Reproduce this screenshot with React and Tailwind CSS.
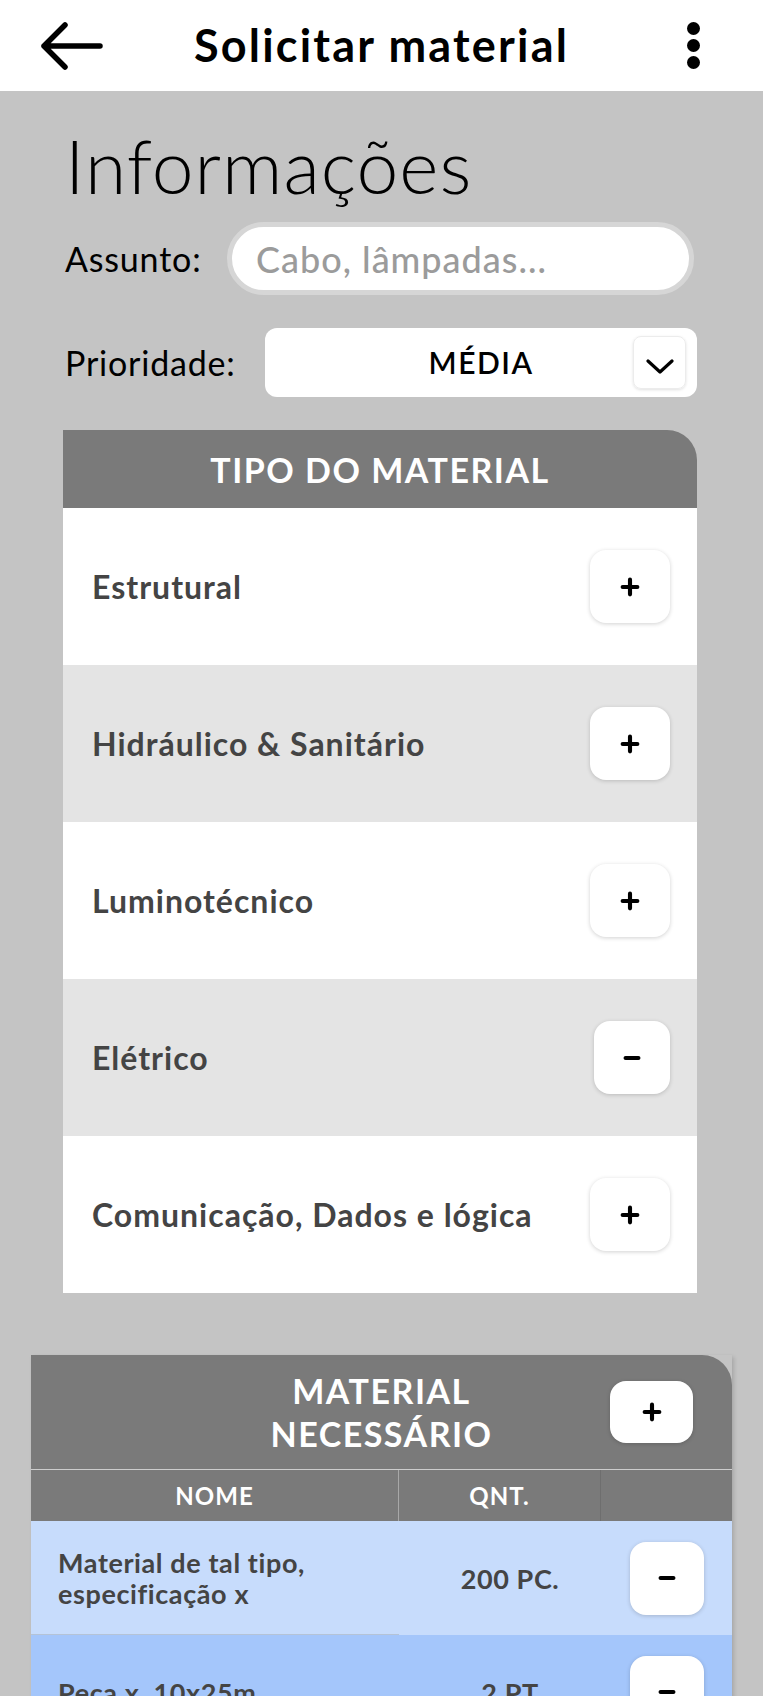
import { useState } from 'react'

const ROW_ICON = {
  plus:  'M12 4v16M4 12h16',
  minus: 'M5 12h14',
}

function SignIcon({ kind }) {
  return (
    <svg className="w-[22px] h-[22px]" viewBox="0 0 24 24" fill="none" stroke="black"
         strokeWidth={4.5} strokeLinecap="round">
      <path d={ROW_ICON[kind]} />
    </svg>
  )
}

function SquareButton({ kind = 'plus', className = '' }) {
  return (
    <button
      className={`flex items-center justify-center bg-white rounded-[16px] shadow-[0_1px_4px_rgba(0,0,0,0.18)] ${className}`}
    >
      <SignIcon kind={kind} />
    </button>
  )
}

// tipo do material rows
const TIPOS = [
  { label: 'Estrutural',                   kind: 'plus',  bg: 'bg-white' },
  { label: 'Hidráulico & Sanitário',       kind: 'plus',  bg: 'bg-[#e4e4e4]' },
  { label: 'Luminotécnico',                kind: 'plus',  bg: 'bg-white' },
  { label: 'Elétrico',                     kind: 'minus', bg: 'bg-[#e4e4e4]' },
  { label: 'Comunicação, Dados e lógica',  kind: 'plus',  bg: 'bg-white' },
]

const MATERIAIS = [
  { nome: ['Material de tal tipo,', 'especificação x'], qnt: '200 PC.', bg: 'bg-[#c7dcfc]' },
  { nome: ['Peça x, 10x25m'],                           qnt: '2 PT',    bg: 'bg-[#a4c6fb]' },
]

export default function App() {
  const [assunto, setAssunto] = useState('')

  return (
    <div className="w-[763px] h-[1696px] overflow-hidden bg-[#c4c4c4] font-['Lato',sans-serif] text-black">

      {/* ── top bar ── */}
      <header className="h-[91px] bg-white grid grid-cols-[1fr_auto_1fr] items-center">
        <button className="ml-[39px] w-[66px] h-[48px] flex items-center">
          <svg className="w-[66px] h-[48px]" viewBox="0 0 66 48" fill="none" stroke="black"
               strokeWidth={5.5} strokeLinecap="round" strokeLinejoin="round">
            <path d="M5 24h56M26 3L5 24l21 21" />
          </svg>
        </button>
        <h1 className="text-[45px] font-bold tracking-[2.2px] leading-none">Solicitar material</h1>
        <div className="justify-self-end mr-[63px] flex flex-col items-center gap-[4px]">
          <span className="w-[13px] h-[13px] rounded-full bg-black" />
          <span className="w-[13px] h-[13px] rounded-full bg-black" />
          <span className="w-[13px] h-[13px] rounded-full bg-black" />
        </div>
      </header>

      <main className="pl-[63px] pr-[66px]">
        <h2 className="mt-[37px] ml-[2px] text-[75px] font-light tracking-[1px] leading-none">Informações</h2>

        {/* ── assunto ── */}
        <div className="mt-[19px] flex items-center">
          <label className="ml-[2px] w-[162px] text-[34px] tracking-[0.8px] leading-none">Assunto:</label>
          <input
            value={assunto}
            onChange={e => setAssunto(e.target.value)}
            placeholder="Cabo, lâmpadas..."
            className="w-[467px] h-[73px] rounded-full bg-white border-[5px] border-[#d6d6d6] pl-[24px] text-[36px] tracking-[1px] font-medium text-black placeholder:text-[#9b9b9b] outline-none"
          />
        </div>

        {/* ── prioridade ── */}
        <div className="mt-[33px] flex items-center">
          <label className="ml-[2px] w-[200px] text-[34px] tracking-[0.8px] leading-none">Prioridade:</label>
          <div className="w-[432px] h-[69px] rounded-[12px] bg-white flex items-center pr-[11px]">
            <span className="flex-1 text-center pl-[64px] text-[30px] font-semibold tracking-[1.5px]">MÉDIA</span>
            <div className="w-[53px] h-[53px] rounded-[8px] border border-[#ececec] shadow-[0_1px_3px_rgba(0,0,0,0.12)] flex items-center justify-center">
              <svg className="w-[30px] h-[16px] mt-[6px]" viewBox="0 0 30 16" fill="none" stroke="black"
                   strokeWidth={3.2} strokeLinecap="round" strokeLinejoin="round">
                <path d="M3 3l12 11L27 3" />
              </svg>
            </div>
          </div>
        </div>

        {/* ── tipo do material ── */}
        <section className="mt-[33px]">
          <div className="h-[78px] bg-[#7a7a7a] rounded-tr-[30px] flex items-center justify-center">
            <h3 className="text-white text-[34px] font-bold tracking-[1.5px]">TIPO DO MATERIAL</h3>
          </div>
          {TIPOS.map(t => (
            <div key={t.label} className={`h-[157px] ${t.bg} flex items-center justify-between pl-[29px] pr-[27px]`}>
              <span className="text-[32px] font-bold tracking-[1px] text-[#444]">{t.label}</span>
              <SquareButton kind={t.kind} className={t.kind === 'minus' ? 'w-[76px] h-[73px]' : 'w-[80px] h-[73px]'} />
            </div>
          ))}
        </section>

        {/* ── material necessario ── */}
        <section className="mt-[62px] -ml-[32px] -mr-[35px] shadow-[2px_2px_4px_rgba(0,0,0,0.15)]">
          <div className="h-[114px] bg-[#7a7a7a] rounded-tr-[30px] grid grid-cols-[1fr_auto_1fr] items-center">
            <div />
            <h3 className="text-white text-[34px] font-bold tracking-[1.5px] leading-[43px] text-center">
              MATERIAL<br />NECESSÁRIO
            </h3>
            <SquareButton kind="plus" className="justify-self-end mr-[39px] w-[83px] h-[62px] rounded-[14px]" />
          </div>

          <div className="h-[52px] bg-[#7a7a7a] border-t border-[#cdcdcd] grid grid-cols-[368px_202px_130px] text-white text-[24px] font-bold tracking-[1px]">
            <div className="flex items-center justify-center border-r border-[#a8a8a8]">NOME</div>
            <div className="flex items-center justify-center border-r border-[#6e6e6e]">QNT.</div>
            <div />
          </div>

          {MATERIAIS.map((m, i) => (
            <div key={i} className={`h-[114px] ${m.bg} grid grid-cols-[368px_202px_130px] items-center text-[27px] font-bold tracking-[0.6px] text-[#444] leading-[31px]`}>
              <div className={`h-full flex flex-col justify-center pl-[27px] ${i === 0 ? 'border-b border-[#b5c3d6]' : ''}`}>
                {m.nome.map(l => <span key={l}>{l}</span>)}
              </div>
              <div className="text-center pl-[20px]">{m.qnt}</div>
              <div className="flex justify-center pl-[1px]">
                <SquareButton kind="minus" className="w-[74px] h-[73px]" />
              </div>
            </div>
          ))}
        </section>
      </main>
    </div>
  )
}
